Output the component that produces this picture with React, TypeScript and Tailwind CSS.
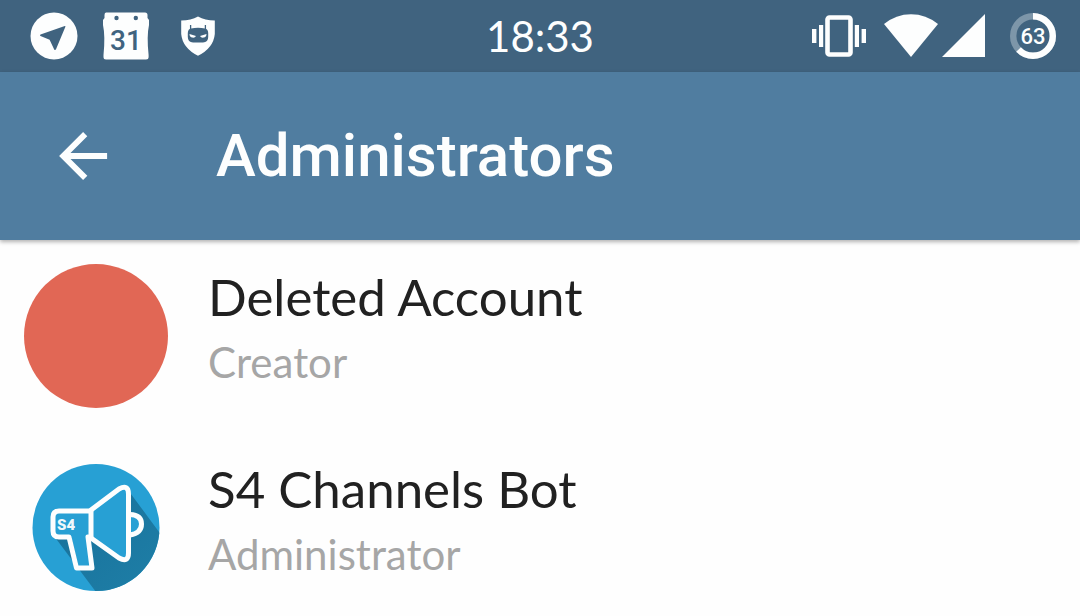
import React from 'react';

const TelegramIcon = () => (
  <svg viewBox="0 0 60 60" className="w-[60px] h-[60px]" aria-hidden="true">
    <circle cx="30" cy="30" r="23.5" fill="#fdfefe" />
    <path d="M40.8 20 L16.5 28.6 Q15.4 29.3 16.5 30 L25.6 33.8 L30.2 43.4 Q31.2 44.6 32 43.2 L41.4 20.8 Q41.6 19.8 40.8 20Z" fill="#40637f" />
  </svg>
);

const CalendarIcon = () => (
  <svg viewBox="0 0 60 60" className="w-[60px] h-[60px]" aria-hidden="true">
    <path
      d="M10 6.5 H49 Q51.5 6.5 51.5 9 V12 L53 14 V19 Q50.6 30 52.6 49 V51 Q52.6 53.5 50 53.5 H10 Q7.5 53.5 7.5 51 V49 Q9.4 30 7 19 V14 L8.5 12 V9 Q8.5 6.5 10 6.5Z"
      fill="#fdfefe"
    />
    <circle cx="20.5" cy="12" r="2.2" fill="#40637f" />
    <circle cx="39.8" cy="12" r="2.2" fill="#40637f" />
    <text x="30" y="44" textAnchor="middle" fontSize="28" fontWeight="500" fontFamily="Roboto, sans-serif" fill="#40637f">31</text>
  </svg>
);

const ShieldIcon = () => (
  <svg viewBox="0 0 60 60" className="w-[60px] h-[60px]" aria-hidden="true">
    <path d="M30 10.5 Q37 14.3 46.8 14.5 V28 Q45.5 42 30 49.8 Q14.5 42 13.2 28 V14.5 Q23 14.3 30 10.5Z" fill="#fdfefe" />
    <path d="M22.6 19 V25 M37.4 19 V25" stroke="#40637f" strokeWidth="1.3" />
    <path d="M23 22.4 Q30 21.2 37 22.4 Q40.2 23.2 40.2 27 V31 Q40.2 36.4 35 36.4 H25 Q19.8 36.4 19.8 31 V27 Q19.8 23.2 23 22.4Z" fill="#40637f" />
    <path d="M21.5 28 L28 30 Q27 32 24.4 31.6 Q21.6 31.2 21.5 28Z M38.5 28 L32 30 Q33 32 35.6 31.6 Q38.4 31.2 38.5 28Z" fill="#fdfefe" />
  </svg>
);

const VibrateIcon = () => (
  <svg viewBox="0 0 54 48" className="w-[54px] h-12" aria-hidden="true">
    <rect x="15.5" y="5.5" width="23" height="37" rx="2" fill="none" stroke="#fdfefe" strokeWidth="4.6" />
    <path d="M0 17h4.4v14H0z M7 13h4.2v22H7z M42.8 13H47v22h-4.2z M49.6 17H54v14h-4.4z" fill="#fdfefe" />
  </svg>
);

const WifiIcon = () => (
  <svg viewBox="0 0 54 48" className="w-[54px] h-12" aria-hidden="true">
    <path d="M0 12 Q12 2.2 27 2.2 T54 12 L27 45Z" fill="#fdfefe" />
  </svg>
);

const SignalIcon = () => (
  <svg viewBox="0 0 44 48" className="w-11 h-12" aria-hidden="true">
    <path d="M43 2 V45 H0Z" fill="#fdfefe" />
  </svg>
);

const BatteryIcon = ({ level }: { level: number }) => (
  <svg viewBox="0 0 46 46" className="w-[46px] h-[46px]" role="img" aria-label={`Battery ${level}%`}>
    <circle cx="23" cy="23" r="19.8" fill="none" stroke="#7d96a9" strokeWidth="6.4" />
    <circle
      cx="23"
      cy="23"
      r="19.8"
      fill="none"
      stroke="#fdfefe"
      strokeWidth="6.4"
      pathLength="100"
      strokeDasharray={`${level} 100`}
      transform="rotate(-90 23 23)"
    />
    <text x="23" y="31" textAnchor="middle" fontSize="22" fontWeight="500" fontFamily="Roboto, sans-serif" fill="#fdfefe">{level}</text>
  </svg>
);

const BackIcon = () => (
  <svg viewBox="0 0 24 24" className="w-[72px] h-[72px]" fill="#fdfefe" aria-hidden="true">
    <path d="M19.7 11H7.5l5.59-5.59L11.7 4l-8 8 8 8 1.41-1.41L7.5 13H19.7v-2z" />
  </svg>
);

const BotAvatar = () => (
  <svg viewBox="0 0 144 144" className="w-36 h-36 shrink-0" aria-hidden="true">
    <defs>
      <clipPath id="bot-circle">
        <circle cx="72" cy="71.5" r="63.5" />
      </clipPath>
      <linearGradient id="bot-shade" x1="0" y1="0" x2="1" y2="1">
        <stop offset="0" stopColor="#17709a" />
        <stop offset="1" stopColor="#1f80a8" />
      </linearGradient>
    </defs>
    <g clipPath="url(#bot-circle)">
      <rect width="144" height="144" fill="#27a0d4" />
      <path d="M104 34 L144 88 V144 H78 L30 80 L46 81 L62 81 L68 80Z" fill="url(#bot-shade)" />
      <path d="M67 55 L97 33 Q104 29 104 38 V98 Q104 107 96 102 L67 81Z" fill="#27a0d4" />
      <path d="M47 80 L55 112 H67 L63 80Z" fill="#27a0d4" />
      <path d="M106 60 Q116 60 116 68 Q116 76 106 78Z" fill="#27a0d4" />
    </g>
    <g fill="none" stroke="#fdfefe" strokeWidth="5" strokeLinejoin="round" strokeLinecap="round">
      <path d="M67 55 H35 Q29 55 29 61 V75 Q29 81 35 81 H45 L52.5 112 H68 L64 81 H67Z" />
      <path d="M67 54 L95 33 Q104.5 28 104.5 38 V97 Q104.5 107 95 102 L67 82" />
      <path d="M106 58.5 Q117.5 59 117.5 68 Q117.5 77 106 79" />
    </g>
    <text x="33" y="74" fontSize="15" fontWeight="900" fontFamily="Roboto, sans-serif" fill="#f0f8fb">S4</text>
  </svg>
);

const ADMINS = [
  { name: 'Deleted Account', role: 'Creator', avatar: <div className="w-36 h-36 shrink-0 rounded-full bg-[#e16755]"></div> },
  { name: 'S4 Channels Bot', role: 'Administrator', avatar: <BotAvatar /> },
];

const App: React.FC = () => {
  return (
    <div className="min-h-screen bg-[#fefefe] font-['Lato',sans-serif]">
      {/* Status bar */}
      <div className="grid grid-cols-3 items-center h-[72px] px-6 bg-[#40637f]">
        <div className="flex items-center gap-3">
          <TelegramIcon />
          <CalendarIcon />
          <ShieldIcon />
        </div>
        <time className="text-center text-[42px] leading-[72px] text-[#fdfefe]">18:33</time>
        <div className="flex items-center justify-end">
          <VibrateIcon />
          <div className="flex items-center gap-1 ml-[18px] mr-6">
            <WifiIcon />
            <SignalIcon />
          </div>
          <BatteryIcon level={63} />
        </div>
      </div>

      <header className="flex items-center gap-24 h-[168px] px-12 bg-[#507da0] shadow-[0_2px_4px_rgba(0,0,0,0.3)]">
        <button type="button" aria-label="Back">
          <BackIcon />
        </button>
        <h1 className="font-['Roboto',sans-serif] text-[60px] font-medium text-[#fdfefe]">Administrators</h1>
      </header>

      <ul className="flex flex-col gap-12 px-6 pt-6 pb-4">
        {ADMINS.map((admin) => (
          <li key={admin.name} className="flex items-start gap-10">
            {admin.avatar}
            <div className="min-w-0">
              <h2 className="text-[51px] leading-[66px] text-[#212121]">{admin.name}</h2>
              <p className="text-[42px] leading-[64px] text-[#a6a6a6]">{admin.role}</p>
            </div>
          </li>
        ))}
      </ul>
    </div>
  );
};

export default App;
